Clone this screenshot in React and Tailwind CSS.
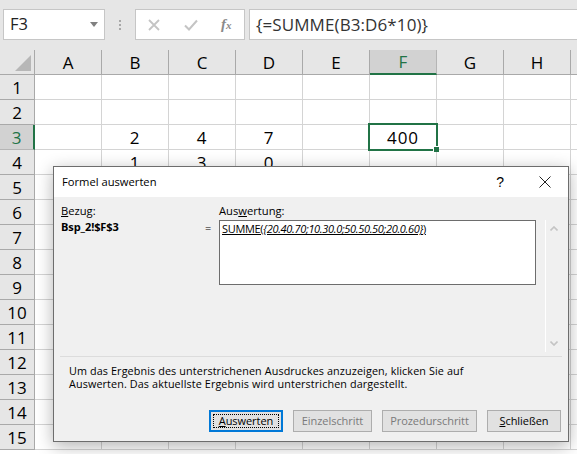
const cols = ["A","B","C","D","E","F","G","H",""];
const rows = [1,2,3,4,5,6,7,8,9,10,11,12,13,14,15];
const vals = { "3B":"2","3C":"4","3D":"7","3F":"400","4B":"1","4C":"3","4D":"0" };

function Btn({ children, active, disabled, w }) {
  return (
    <div className={`${w} h-[22px] flex items-center justify-center text-[11px] tracking-[-0.05px] ${active ? "border-2 border-[#0078d7] bg-[#e1e1e1] text-black" : disabled ? "border border-[#adadad] bg-[#e1e1e1] text-[#7a7a7a]" : "border border-[#adadad] bg-[#e1e1e1] text-black"}`}>
      {active ? <div className="w-[calc(100%-4px)] h-[calc(100%-4px)] border border-dotted border-black flex items-center justify-center">{children}</div> : children}
    </div>
  );
}

export default function App() {
  return (
    <div className="relative w-[577px] h-[454px] overflow-hidden bg-white text-black font-['Open_Sans','Noto_Sans',sans-serif]">
      {/* formula bar */}
      <div className="h-[50px] bg-[#e6e6e6] pt-[9px] flex items-start">
        <div className="ml-[3px] w-[102px] h-[31px] bg-white border border-[#c6c6c6] flex items-center justify-between pl-[6px] pr-[6px] text-[16.5px] text-[#222]">
          <span>F3</span>
          <svg width="8" height="5" viewBox="0 0 8 5"><path d="M0 0h8L4 5z" fill="#808080" /></svg>
        </div>
        <div className="w-[30px] h-[31px] flex flex-col items-center justify-center gap-[2px]">
          <i className="w-[2px] h-[2px] bg-[#a8a8a8]" /><i className="w-[2px] h-[2px] bg-[#a8a8a8]" /><i className="w-[2px] h-[2px] bg-[#a8a8a8]" />
        </div>
        <div className="w-[110px] h-[31px] bg-white border border-[#c6c6c6] flex items-center relative">
          <svg className="ml-[12px]" width="12" height="12" viewBox="0 0 12 12"><path d="M1 1l10 10M11 1L1 11" stroke="#c4c4c4" strokeWidth="1.8" fill="none" /></svg>
          <svg className="ml-[24px]" width="14" height="12" viewBox="0 0 14 12"><path d="M1 6.5l4 4 8-9" stroke="#c4c4c4" strokeWidth="2" fill="none" /></svg>
          <span className="ml-[23px] font-['Liberation_Serif',serif] italic font-bold text-[15px] text-[#8a8a8a] leading-none">f<span className="text-[11px]">x</span></span>
        </div>
        <div className="ml-[4px] flex-1 h-[31px] bg-white border-y border-l border-[#c6c6c6] flex items-center pl-[6px] text-[17px] tracking-[0.1px] text-[#333]">
          {"{=SUMME(B3:D6*10)}"}
        </div>
      </div>

      {/* sheet */}
      <div className="grid grid-cols-[35px_repeat(9,67px)] grid-rows-[25px_repeat(15,25px)] text-[17px] leading-none">
        <div className="bg-[#e6e6e6] border-r border-b border-[#a9a9a9] flex items-end justify-end pr-[3px] pb-[3px]">
          <svg width="16" height="16" viewBox="0 0 16 16"><path d="M16 0v16H0z" fill="#b7b7b7" /></svg>
        </div>
        {cols.map((c, i) => (
          <div key={i} className={`flex items-center justify-center ${c === "F" ? "bg-[#d2d2d2] border-b-2 border-[#217346] text-[#217346] border-r border-r-[#b5b5b5]" : "bg-[#e6e6e6] border-b border-r border-[#a9a9a9]"}`}>{c}</div>
        ))}
        {rows.map(r => [
          <div key={r} className={`flex items-center justify-center ${r === 3 ? "bg-[#d2d2d2] border-r-2 border-[#217346] text-[#217346] border-b border-b-[#b5b5b5]" : "bg-[#e6e6e6] border-r border-b border-[#a9a9a9]"}`}>{r}</div>,
          ...cols.map((c, i) => (
            <div key={r + "-" + i} className="border-r border-b border-[#d4d4d4] flex items-center justify-center tracking-[1px]">{vals[r + c]}</div>
          )),
        ])}
      </div>

      {/* selection */}
      <div className="absolute left-[368px] top-[123px] w-[70px] h-[28px] border-2 border-[#217346]">
        <div className="absolute right-[-3px] bottom-[-3px] w-[6px] h-[6px] bg-[#217346] border-l border-t border-white" />
      </div>

      {/* dialog */}
      <div className="absolute left-[53px] top-[166px] w-[516px] h-[276px] border border-[#6d6d6d] bg-[#f0f0f0] shadow-[0_4px_16px_rgba(0,0,0,0.3)] flex flex-col text-[11px] text-black">
        <div className="h-[30px] shrink-0 bg-white flex items-center pl-[8px]">
          <span className="flex-1 text-[11.2px]">Formel auswerten</span>
          <span className="font-['Liberation_Sans',sans-serif] text-[14px] mr-[35px]">?</span>
          <svg className="mr-[17px]" width="12" height="12" viewBox="0 0 12 12"><path d="M.5.5l11 11M11.5.5l-11 11" stroke="#222" strokeWidth="1" fill="none" /></svg>
        </div>
        <div className="flex-1 flex flex-col px-[6px]">
          <div className="h-[159px] shrink-0 flex">
            <div className="w-[145px] shrink-0 pt-[6px] pl-[1px] leading-[16px]">
              <div className="text-[11.2px]"><u>B</u>ezug:</div>
              <div className="font-bold tracking-[-0.1px]">Bsp_2!$F$3</div>
            </div>
            <div className="w-[14px] shrink-0 pt-[23px] leading-[16px]">=</div>
            <div className="w-[317px] shrink-0 pt-[6px] flex flex-col">
              <div className="leading-[16px] h-[17px] text-[11.2px]">Aus<u>w</u>ertung:</div>
              <div className="w-[317px] h-[65px] bg-white border border-[#6d6d6d] pl-[2px] text-[11px] leading-[15px] tracking-[-0.33px] underline whitespace-nowrap">
                SUMME(<i>{"{20.40.70;10.30.0;50.50.50;20.0.60}"}</i>)
              </div>
            </div>
            <div className="ml-[9px] mt-[23px] w-[17px] shrink-0 h-[132px] border-l border-white flex flex-col items-center justify-between py-[6px]">
              <svg width="8" height="5" viewBox="0 0 8 5"><path d="M.5 4.5L4 1l3.5 3.5" stroke="#c4c4c4" strokeWidth="1.6" fill="none" /></svg>
              <svg width="8" height="5" viewBox="0 0 8 5"><path d="M.5.5L4 4 7.5.5" stroke="#c4c4c4" strokeWidth="1.6" fill="none" /></svg>
            </div>
          </div>
          <div className="h-[1px] w-[502px] bg-[#dcdcdc] shrink-0" />
          <div className="pl-[9px] pt-[7px] text-[10.8px] leading-[13px] tracking-[0.11px] whitespace-nowrap">
            <div>Um das Ergebnis des unterstrichenen Ausdruckes anzuzeigen, klicken Sie auf</div>
            <div>Auswerten. Das aktuellste Ergebnis wird unterstrichen dargestellt.</div>
          </div>
          <div className="mt-[20px] flex gap-[10px] pl-[149px]">
            <Btn active w="w-[74px]"><span><u>A</u>uswerten</span></Btn>
            <Btn disabled w="w-[79px]">Einzelschritt</Btn>
            <Btn disabled w="w-[95px]">Prozedurschritt</Btn>
            <Btn w="w-[74px]"><span><u>S</u>chließen</span></Btn>
          </div>
        </div>
      </div>
    </div>
  );
}
